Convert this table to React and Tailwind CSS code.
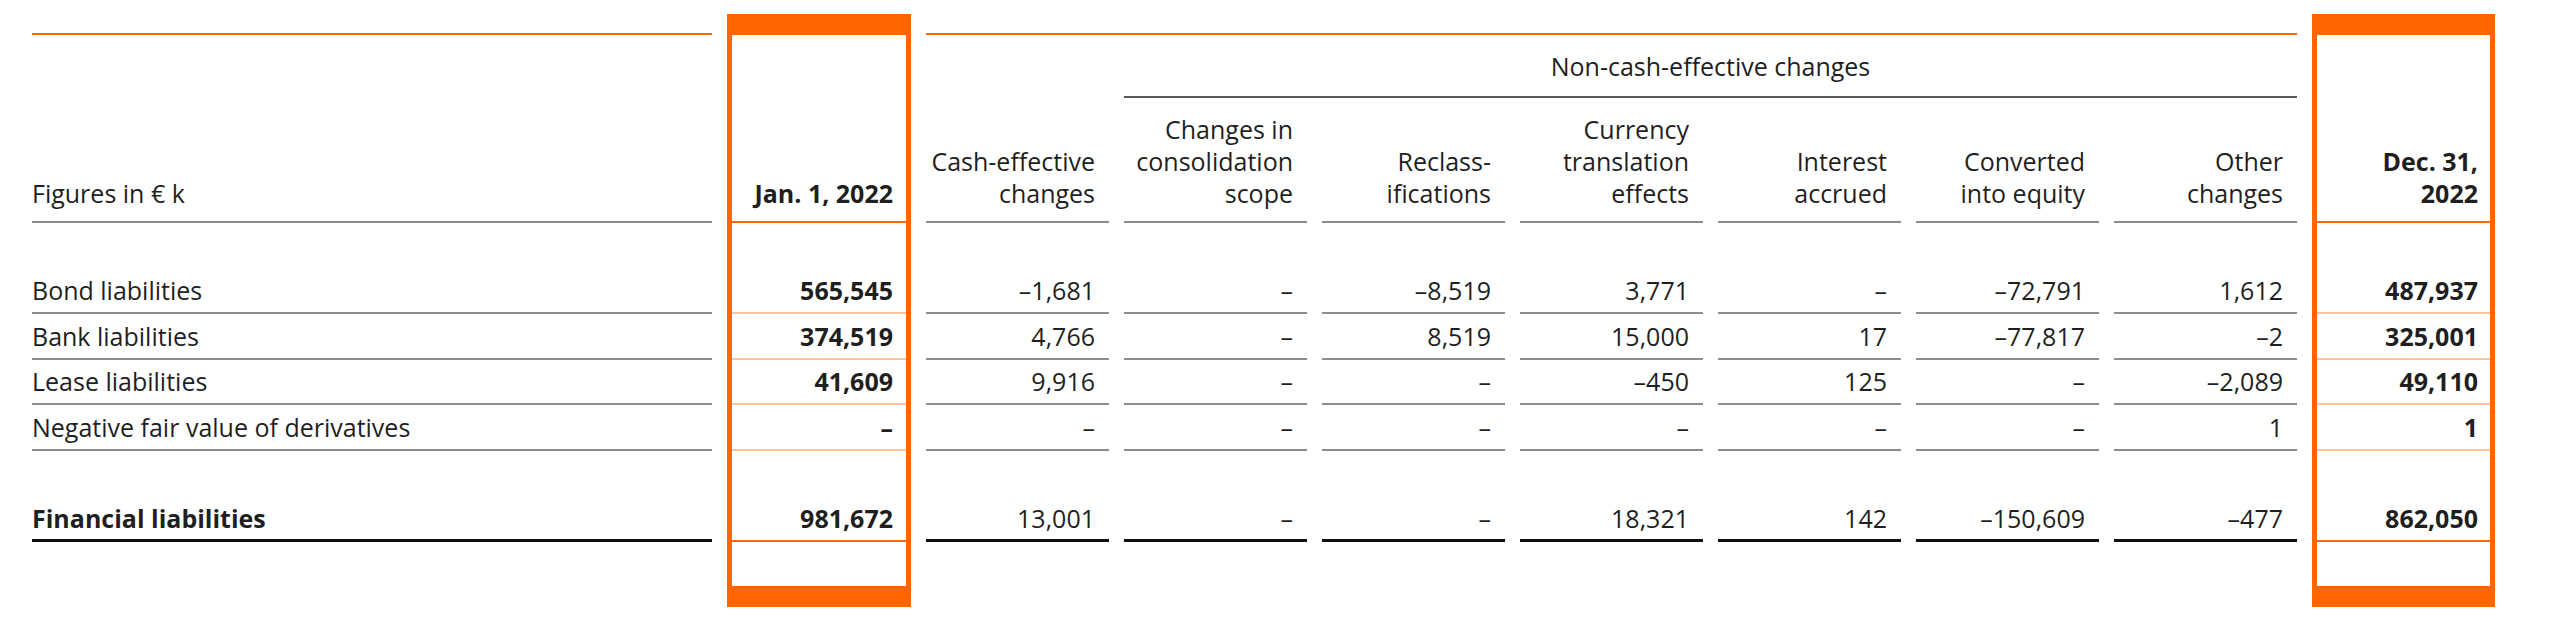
import React from 'react';

const rows = [
  { label: 'Bond liabilities', jan: '565,545', vals: ['–1,681', '–', '–8,519', '3,771', '–', '–72,791', '1,612'], dec: '487,937' },
  { label: 'Bank liabilities', jan: '374,519', vals: ['4,766', '–', '8,519', '15,000', '17', '–77,817', '–2'], dec: '325,001' },
  { label: 'Lease liabilities', jan: '41,609', vals: ['9,916', '–', '–', '–450', '125', '–', '–2,089'], dec: '49,110' },
  { label: 'Negative fair value of derivatives', jan: '–', vals: ['–', '–', '–', '–', '–', '–', '1'], dec: '1' },
];

const total = { label: 'Financial liabilities', jan: '981,672', vals: ['13,001', '–', '–', '18,321', '142', '–150,609', '–477'], dec: '862,050' };

const headers = [
  ['Cash-effective', 'changes'],
  ['Changes in', 'consolidation', 'scope'],
  ['Reclass-', 'ifications'],
  ['Currency', 'translation', 'effects'],
  ['Interest', 'accrued'],
  ['Converted', 'into equity'],
  ['Other', 'changes'],
];

// leere Box-Zelle, nur die orangen Seiten
function BoxSides() {
  return <div className="border-x-[5px] border-[#ff6600]" />;
}

function BoxCell({ children, line = 'light', pr = 'pr-[13px]' }) {
  return (
    <div className="border-x-[5px] border-[#ff6600]">
      <div
        className={`h-full flex items-end justify-end pb-[6px] font-bold ${pr} ${
          line === 'strong' ? 'border-b-2 border-[#ff6600]' : 'border-b-2 border-[#ffc299]'
        }`}
      >
        {children}
      </div>
    </div>
  );
}

function Spacer() {
  return (
    <>
      <div />
      <BoxSides />
      <div className="col-span-7" />
      <BoxSides />
    </>
  );
}

export default function App() {
  return (
    <div className="bg-white w-[2560px] h-[620px] pt-[14px] pl-[32px] font-['Open_Sans',sans-serif] font-normal text-[25px] leading-[32px] text-[#1f1f1f]">
      <div className="grid grid-cols-[680px_184px_repeat(8,183px)] grid-rows-[21px_63px_125px_45px_46px_46px_45px_46px_45px_46px_44px_21px] gap-x-[15px]">
        {/* obere Kante */}
        <div className="border-b-2 border-[#ff6600]" />
        <div className="bg-[#ff6600]" />
        <div className="col-span-7 border-b-2 border-[#ff6600]" />
        <div className="bg-[#ff6600]" />

        {/* Non-cash Überschrift */}
        <div />
        <BoxSides />
        <div />
        <div className="col-span-6 flex items-end justify-center pb-[14px] border-b-2 border-[#5a5a5a]">
          Non-cash-effective changes
        </div>
        <BoxSides />

        {/* Spaltenköpfe */}
        <div className="flex items-end pb-[12px] border-b-2 border-[#8c8c8c]">Figures in € k</div>
        <div className="border-x-[5px] border-[#ff6600]">
          <div className="h-full flex items-end justify-end pr-[13px] pb-[12px] font-bold border-b-2 border-[#ff6600]">
            Jan. 1, 2022
          </div>
        </div>
        {headers.map((h, i) => (
          <div key={i} className="flex items-end justify-end text-right pr-[14px] pb-[12px] border-b-2 border-[#8c8c8c]">
            <span>
              {h.map((t, j) => (
                <React.Fragment key={j}>
                  {j > 0 && <br />}
                  {t}
                </React.Fragment>
              ))}
            </span>
          </div>
        ))}
        <div className="border-x-[5px] border-[#ff6600]">
          <div className="h-full flex items-end justify-end text-right pr-[12px] pb-[12px] font-bold border-b-2 border-[#ff6600]">
            <span>
              Dec. 31,
              <br />
              2022
            </span>
          </div>
        </div>

        <Spacer />

        {rows.map((r) => (
          <React.Fragment key={r.label}>
            <div className="flex items-end pb-[6px] border-b-2 border-[#8c8c8c]">{r.label}</div>
            <BoxCell>{r.jan}</BoxCell>
            {r.vals.map((v, i) => (
              <div key={i} className="flex items-end justify-end pr-[14px] pb-[6px] border-b-2 border-[#8c8c8c]">
                {v}
              </div>
            ))}
            <BoxCell pr="pr-[12px]">{r.dec}</BoxCell>
          </React.Fragment>
        ))}

        <Spacer />

        {/* Summe */}
        <div className="flex items-end pb-[5px] font-bold border-b-[3px] border-[#111]">{total.label}</div>
        <BoxCell line="strong">{total.jan}</BoxCell>
        {total.vals.map((v, i) => (
          <div key={i} className="flex items-end justify-end pr-[14px] pb-[5px] font-medium border-b-[3px] border-[#111]">
            {v}
          </div>
        ))}
        <BoxCell line="strong" pr="pr-[12px]">{total.dec}</BoxCell>

        <Spacer />

        {/* untere Kante */}
        <div />
        <div className="bg-[#ff6600]" />
        <div className="col-span-7" />
        <div className="bg-[#ff6600]" />
      </div>
    </div>
  );
}
